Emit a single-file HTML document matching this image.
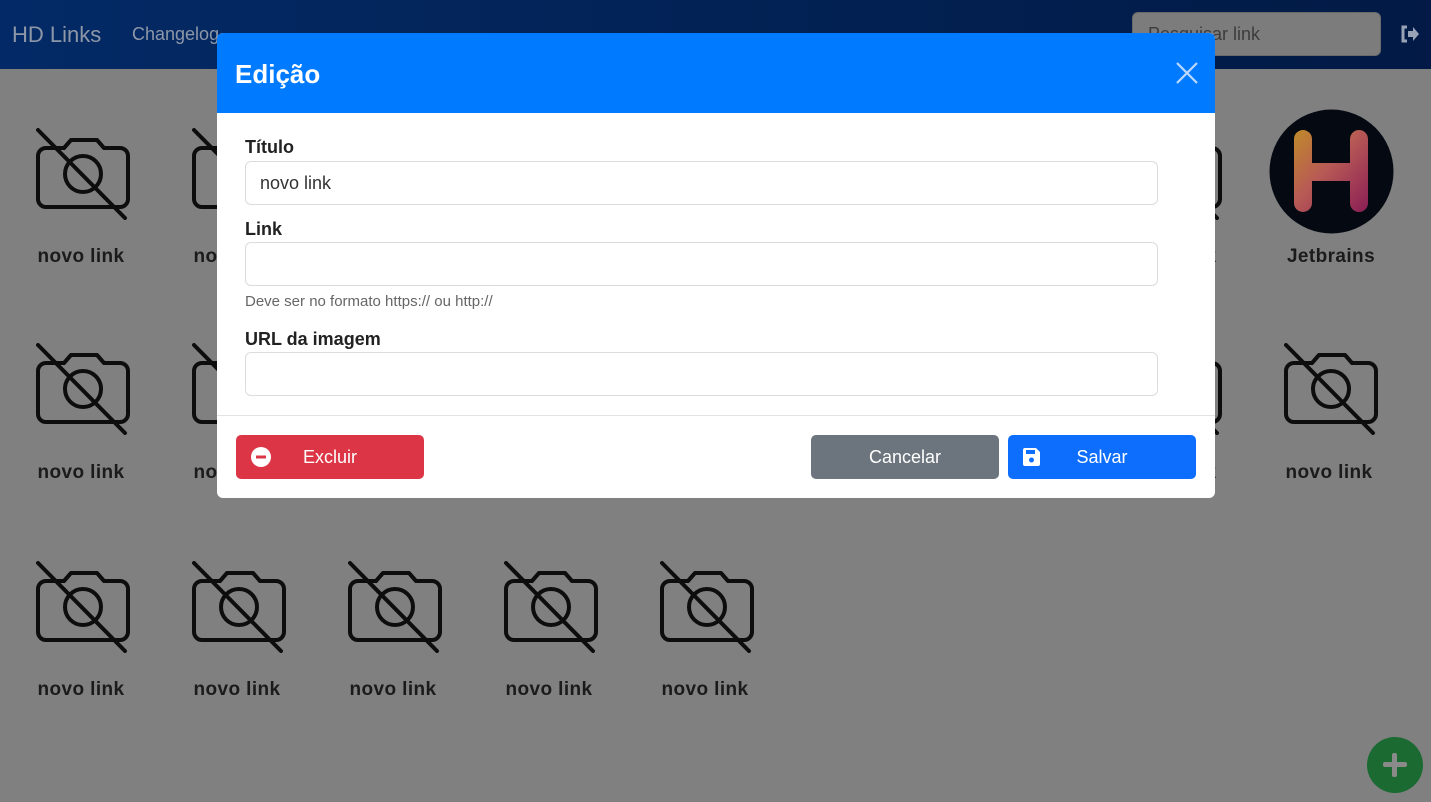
<!DOCTYPE html>
<html><head><meta charset="utf-8"><style>
*{box-sizing:border-box;margin:0;padding:0}
body{width:1431px;height:802px;overflow:hidden;background:#808080;font-family:"Liberation Sans",sans-serif;position:relative}
.nav{position:absolute;left:0;top:0;width:1431px;height:69px;background:linear-gradient(90deg,#032a66,#021a45)}
.brand{position:absolute;left:12px;top:22px;font-size:22px;color:#8e97a8}
.cl{position:absolute;left:132px;top:24px;font-size:18px;color:#8e97a8}
.search{position:absolute;left:1132px;top:12px;width:249px;height:44px;border-radius:6px;background:#7c7c7c;border:1px solid #6a6a6a;color:#3c3c3c;font-size:18px;padding:11px 15px}
.lbl{position:absolute;width:156px;text-align:center;font-weight:bold;font-size:19px;letter-spacing:0.4px;color:#1b1b1b}
.modal{position:absolute;left:217px;top:33px;width:998px;height:465px;background:#fff;border-radius:6px;overflow:hidden}
.mh{height:80px;background:#007bff;position:relative}
.mh h1{position:absolute;left:18px;top:26px;font-size:26px;color:#fff;font-weight:bold}
.fl{position:absolute;left:28px;font-weight:bold;font-size:18px;color:#222}
.inp{position:absolute;left:28px;width:913px;height:44px;border:1px solid #dcdcdc;border-radius:6px;font-size:18px;color:#333;padding:11px 14px}
.help{position:absolute;left:28px;top:260px;font-size:15px;color:#666}
.div{position:absolute;left:0;top:382px;width:998px;height:1px;background:#e3e3e3}
.btn{position:absolute;top:402px;width:188px;height:44px;border-radius:5px;color:#fff;font-size:18px;text-align:center;line-height:44px}
</style></head><body>
<div class="nav"><div class="brand">HD Links</div><div class="cl">Changelog</div>
<div class="search">Pesquisar link</div>
<svg style="position:absolute;left:1400px;top:25px" width="20" height="18" viewBox="0 0 20 18"><path d="M7 2H3v14h4" fill="none" stroke="#9aa3b5" stroke-width="3"/><path d="M8 6h5V2l6 7-6 7v-4H8z" fill="#9aa3b5"/></svg>
</div>

<div id="grid"></div>
<svg width="0" height="0" style="position:absolute"><defs><g id="cam" fill="none" stroke="#0d0d0d" stroke-width="4" stroke-linecap="round" stroke-linejoin="round"><path d="M27 19h-18a8 8 0 0 0-8 8v43a8 8 0 0 0 8 8h74a8 8 0 0 0 8-8v-43a8 8 0 0 0-8-8h-16l-7-8h-26l-7 8"/><circle cx="46" cy="45" r="18"/><path d="M1 1L88 89"/></g></defs></svg>
<script>
var g=document.getElementById('grid'),h='';
var rows=[[128,257,9],[343,473,9],[561,690,5]];
rows.forEach(function(r){for(var c=0;c<r[2];c++){var x=3+c*156;
if(r[0]==128&&c==8){h+='<svg style="position:absolute;left:1269px;top:109px" width="125" height="125" viewBox="0 0 125 125"><defs><linearGradient id="hg" x1="0" y1="0" x2="1" y2="1"><stop offset="0" stop-color="#c08a2a"/><stop offset=".45" stop-color="#b85a55"/><stop offset="1" stop-color="#8a1e55"/></linearGradient></defs><circle cx="62.5" cy="62.5" r="62" fill="#050a12"/><path d="M25 30a9 9 0 0 1 18 0v24h38v-24a9 9 0 0 1 18 0v64a9 9 0 0 1-18 0v-22h-38v22a9 9 0 0 1-18 0z" fill="url(#hg)"/></svg><div class="lbl" style="left:'+(x+2)+'px;top:'+(r[1]-11)+'px">Jetbrains</div>';continue;}
h+='<svg style="position:absolute;left:'+(x+33)+'px;top:'+r[0]+'px" width="94" height="92" viewBox="-1 -1 94 92"><use href="#cam"/></svg><div class="lbl" style="left:'+x+'px;top:'+(r[1]-11)+'px">novo link</div>';}});
g.innerHTML=h;
</script>

<div style="position:absolute;left:1367px;top:737px;width:56px;height:56px;border-radius:50%;background:#1a6a32"></div>
<div style="position:absolute;left:1383px;top:762px;width:24px;height:5px;background:#8a8a8a;border-radius:2px"></div>
<div style="position:absolute;left:1392px;top:753px;width:5px;height:24px;background:#8a8a8a;border-radius:2px"></div>

<div class="modal">
<div class="mh"><h1>Edição</h1>
<svg style="position:absolute;left:959px;top:29px" width="22" height="22" viewBox="0 0 22 22"><path d="M1 1L21 21M21 1L1 21" stroke="#bcd8ff" stroke-width="2.2"/></svg></div>
<div class="fl" style="top:104px">Título</div>
<div class="inp" style="top:128px">novo link</div>
<div class="fl" style="top:186px">Link</div>
<div class="inp" style="top:209px"></div>
<div class="help">Deve ser no formato https:// ou http://</div>
<div class="fl" style="top:296px">URL da imagem</div>
<div class="inp" style="top:319px"></div>
<div class="div"></div>
<div class="btn" style="left:19px;background:#dc3545">Excluir
<svg style="position:absolute;left:15px;top:12px" width="20" height="20" viewBox="0 0 20 20"><circle cx="10" cy="10" r="10" fill="#fff"/><rect x="5" y="8.5" width="10" height="3" fill="#dc3545"/></svg></div>
<div class="btn" style="left:594px;background:#6c757d">Cancelar</div>
<div class="btn" style="left:791px;background:#0d6efd">Salvar
<svg style="position:absolute;left:15px;top:13px" width="17" height="18" viewBox="0 0 17 18"><path d="M0 2a2 2 0 0 1 2-2h11l4 4v12a2 2 0 0 1-2 2H2a2 2 0 0 1-2-2z" fill="#fff"/><rect x="3" y="2" width="9" height="4" fill="#0d6efd"/><circle cx="8.5" cy="12" r="2.5" fill="#0d6efd"/></svg></div>
</div>
</body></html>
